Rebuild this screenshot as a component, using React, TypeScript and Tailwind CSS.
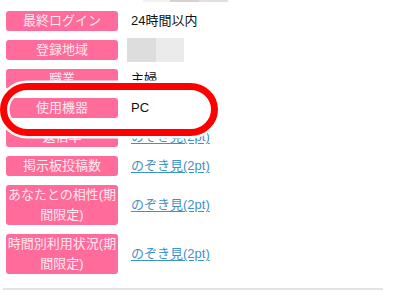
import React from "react";

type Row = {
  label: React.ReactNode;
  value: React.ReactNode;
  tall?: boolean;
};

function Peek() {
  return (
    <a href="#" className="text-[#3f92c8] underline underline-offset-2">
      のぞき見(2pt)
    </a>
  );
}

const rows: Row[] = [
  { label: "最終ログイン", value: "24時間以内" },
  {
    label: "登録地域",
    value: (
      <div className="flex -my-[2px] -ml-[4px]">
        <div className="w-[29px] h-[24px] bg-[#dddddd]" />
        <div className="w-[28px] h-[24px] bg-[#ebebeb]" />
      </div>
    ),
  },
  { label: "職業", value: "主婦" },
  { label: "使用機器", value: "PC" },
  { label: "返信率", value: <Peek /> },
  { label: "掲示板投稿数", value: <Peek /> },
  { label: "あなたとの相性(期間限定)", value: <Peek />, tall: true },
  { label: "時間別利用状況(期間限定)", value: <Peek />, tall: true },
];

export default function App() {
  return (
    <div className="relative w-[395px] h-[299px] overflow-hidden bg-white font-['Liberation_Sans','Noto_Sans_CJK_JP',sans-serif] text-[13px]">
      <div className="flex ml-[143px] h-[2px]">
        <div className="w-[27px] bg-[#f2f2f2]" />
        <div className="w-[29px] bg-[#d8d0d4]" />
        <div className="w-[29px] bg-[#e3dfe1]" />
      </div>

      <div className="flex flex-col gap-[9px] mt-[9px] pl-[6px]">
        {rows.map((r, i) => (
          <div key={i} className="flex items-center gap-[13px]">
            <div
              className={
                "w-[112px] shrink-0 rounded-[3px] bg-[#ff6b9a] text-[#ffe9f0] text-center leading-[20px] " +
                (r.tall ? "h-[40px] px-[1px]" : "h-[20px]")
              }
            >
              {r.label}
            </div>
            <div className="text-[#111111] leading-[20px]">{r.value}</div>
          </div>
        ))}
      </div>

      <div className="mt-[14px] ml-[3px] w-[380px] h-[2px] bg-[#e3e3e3]" />

      <svg
        className="absolute left-0 top-0 pointer-events-none"
        width="395"
        height="299"
      >
        <rect
          x="3.5"
          y="86.5"
          width="211"
          height="46"
          rx="24"
          fill="none"
          stroke="#ffffff"
          strokeWidth="12"
        />
        <rect
          x="3.5"
          y="86.5"
          width="211"
          height="46"
          rx="24"
          fill="none"
          stroke="#ff0000"
          strokeWidth="7"
        />
      </svg>
    </div>
  );
}
